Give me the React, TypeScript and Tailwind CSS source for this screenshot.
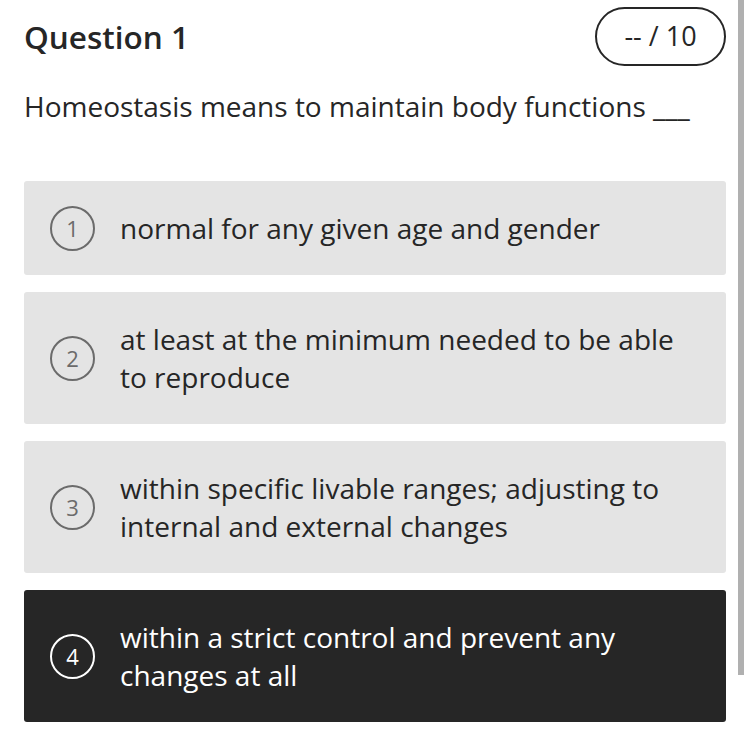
import React from "react";

const options = [
  { n: 1, text: "normal for any given age and gender" },
  { n: 2, text: "at least at the minimum needed to be able to reproduce" },
  { n: 3, text: "within specific livable ranges; adjusting to internal and external changes" },
  { n: 4, text: "within a strict control and prevent any changes at all", selected: true },
];

export default function App() {
  return (
    <div className="flex w-[750px] h-[750px] bg-white overflow-hidden" style={{ fontFamily: '"Open Sans", sans-serif' }}>
      <div className="flex-1 pl-[24px] pt-[7px]">
        <div className="flex items-center justify-between">
          <h1 className="text-[31.5px] font-semibold text-[#262626] leading-none">Question 1</h1>
          <div className="w-[131px] h-[59px] rounded-full border-2 border-[#262626] flex items-center justify-center text-[27px] text-[#262626]">
            -- / 10
          </div>
        </div>
        <p className="mt-[21px] text-[28px] leading-[38px] text-[#262626]">
          Homeostasis means to maintain body functions ___
        </p>
        <div className="mt-[56px] flex flex-col gap-[17px]">
          {options.map((o) => (
            <div
              key={o.n}
              className={`flex items-center rounded-[3px] pl-[26px] pr-[40px] ${
                o.n === 1 ? "h-[94px]" : "h-[132px]"
              } ${o.selected ? "bg-[#262626] text-white" : "bg-[#e4e4e4] text-[#262626]"}`}
            >
              <div
                className={`w-[45px] h-[45px] shrink-0 rounded-full border-2 flex items-center justify-center text-[22px] ${
                  o.selected ? "border-white text-white" : "border-[#6b6b6b] text-[#6b6b6b]"
                }`}
              >
                {o.n}
              </div>
              <div className="ml-[25px] text-[28px] leading-[38px]">{o.text}</div>
            </div>
          ))}
        </div>
      </div>
      <div className="ml-[12px] mr-[6px] w-[6px] h-[675px] bg-[#b0b0b0]" />
    </div>
  );
}
